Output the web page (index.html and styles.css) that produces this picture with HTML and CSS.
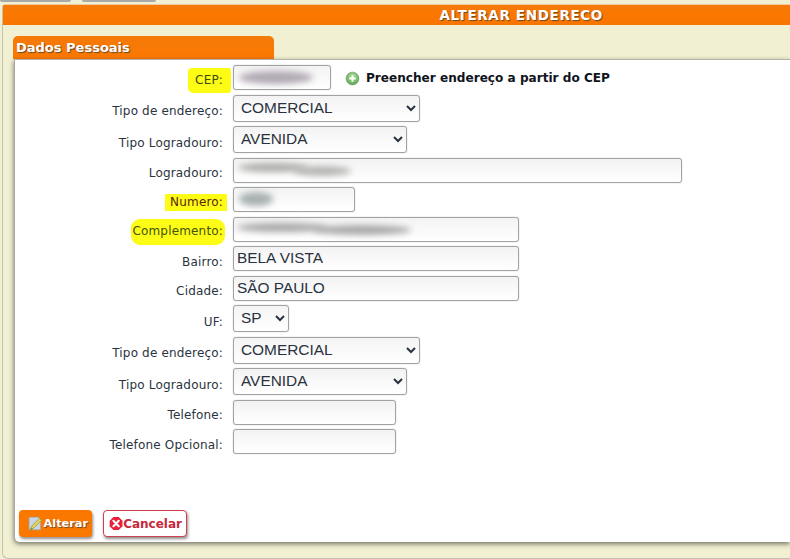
FILE: index.html
```html
<!DOCTYPE html>
<html lang="pt-BR">
<head>
<meta charset="utf-8">
<title>Alterar Endereco</title>
<link rel="stylesheet" href="styles.css">
</head>
<body>
<div class="top-tabs"><span class="top-tab first"></span><span class="top-tab second"></span></div>
<main class="outer">
  <header class="title-bar"><h1>ALTERAR ENDERECO</h1></header>
  <section class="content">
    <h2 class="section-tab">Dados Pessoais</h2>
    <div class="panel">
      <form class="form">
        <label class="lbl"><span class="mark mark-cep">CEP:</span></label>
        <div class="field cep-row">
          <span class="wrap"><input class="inp w-cep" type="text"><i class="smudge s-cep"></i></span>
          <a class="cep-link"><svg class="plus" viewBox="0 0 16 16" width="15" height="15"><defs><radialGradient id="g" cx="50%" cy="35%" r="65%"><stop offset="0" stop-color="#b5dfa5"/><stop offset="1" stop-color="#58a84f"/></radialGradient></defs><circle cx="8" cy="8" r="6.8" fill="url(#g)" stroke="#6f9f6a" stroke-width=".8"/><path d="M8 4.5v7M4.5 8h7" stroke="#fff" stroke-width="2"/></svg>Preencher endereço a partir do CEP</a>
        </div>
        <label class="lbl">Tipo de endereço:</label>
        <div class="field"><select class="sel w-tipo"><option>COMERCIAL</option></select></div>
        <label class="lbl">Tipo Logradouro:</label>
        <div class="field"><select class="sel w-log"><option>AVENIDA</option></select></div>
        <label class="lbl">Logradouro:</label>
        <div class="field"><span class="wrap"><input class="inp w-long" type="text"><i class="smudge s-log"></i><i class="smudge s-log2"></i></span></div>
        <label class="lbl"><span class="mark mark-num">Numero:</span></label>
        <div class="field"><span class="wrap"><input class="inp w-num" type="text"><i class="smudge s-num"></i></span></div>
        <label class="lbl"><span class="mark mark-comp">Complemento:</span></label>
        <div class="field"><span class="wrap"><input class="inp w-mid" type="text"><i class="smudge s-comp"></i><i class="smudge s-comp2"></i></span></div>
        <label class="lbl">Bairro:</label>
        <div class="field"><input class="inp w-mid" type="text" value="BELA VISTA"></div>
        <label class="lbl">Cidade:</label>
        <div class="field"><input class="inp w-mid" type="text" value="SÃO PAULO"></div>
        <label class="lbl">UF:</label>
        <div class="field"><select class="sel w-uf"><option>SP</option></select></div>
        <label class="lbl">Tipo de endereço:</label>
        <div class="field"><select class="sel w-tipo"><option>COMERCIAL</option></select></div>
        <label class="lbl">Tipo Logradouro:</label>
        <div class="field"><select class="sel w-log"><option>AVENIDA</option></select></div>
        <label class="lbl">Telefone:</label>
        <div class="field"><input class="inp w-tel" type="text"></div>
        <label class="lbl">Telefone Opcional:</label>
        <div class="field"><input class="inp w-tel" type="text"></div>
      </form>
      <div class="actions">
        <button class="btn btn-save" type="button"><svg viewBox="0 0 16 16" width="17" height="17"><path d="M2 2h9l2 2v10H2z" fill="#c9d6e6" stroke="#9aa9b8" stroke-width=".7"/><path d="M3 14 L5 10 L12 3 L14 5 L7 12 Z" fill="#e8d060" stroke="#8f9b3a" stroke-width=".7"/><path d="M3 15l1-3 2 1z" fill="#7d9a3a"/></svg>Alterar</button>
        <button class="btn btn-cancel" type="button"><svg viewBox="0 0 16 16" width="15" height="15"><path d="M5 .8h6L15.2 5v6L11 15.2H5L.8 11V5z" fill="#e8203a"/><path d="M5 5l6 6M11 5l-6 6" stroke="#fff" stroke-width="2.4" stroke-linecap="round"/></svg>Cancelar</button>
      </div>
    </div>
  </section>
</main>
</body>
</html>
```
FILE: styles.css
```css
* { box-sizing: border-box; }
html, body { margin: 0; padding: 0; height: 559px; overflow: hidden; background: #f2f0d2; }
body { font-family: "DejaVu Sans", Verdana, sans-serif; font-size: 12px; color: #2b3340; }

.top-tabs { display: flex; gap: 11px; height: 4px; align-items: flex-start; }
.top-tab { display: block; height: 2px; background: #a9a9a5; border-radius: 0 0 3px 3px; }
.top-tab.first { width: 71px; }
.top-tab.second { width: 74px; }

.outer { margin-left: 2px; height: 555px; border-left: 1px solid #c4c2aa; border-top: 1px solid #f0c9a0; border-radius: 4px 0 0 6px; border-bottom: 1px solid #c4c2aa; background: #f2f0d2; }
.title-bar { height: 20px; background: linear-gradient(#f47a0a, #fb7800 40%, #f97500); display: flex; justify-content: flex-end; padding-right: 187px; align-items: center; }
.title-bar h1 { margin: 0; color: #fff; font-size: 13.5px; font-weight: 700; line-height: 20px; letter-spacing: .65px; text-shadow: 1px 1px 1px #6b4a20; }

.content { padding: 11px 0 0 10px; }
.section-tab { margin: 0; width: 261px; height: 23px; padding-left: 3px; background: linear-gradient(#f47a0a, #fb7800); border-radius: 5px 5px 0 0; color: #fff; font-size: 13px; font-weight: 700; line-height: 23px; text-shadow: 1px 1px 1px #6b4a20; }
.panel { margin-left: 1px; height: 483px; background: #fff; border-top: 1px solid #b4b4a8; border-left: 1px solid #a8a8a0; border-radius: 0 0 0 5px; box-shadow: 0 2px 5px rgba(60, 60, 50, .7); display: flex; flex-direction: column; }

.form { display: grid; grid-template-columns: 208px 1fr; column-gap: 10px; margin-top: 5px; }
.lbl { display: flex; justify-content: flex-end; align-items: center; padding-top: 2px; white-space: nowrap; letter-spacing: .17px; }
.field { display: flex; align-items: center; margin-bottom: 4.5px; min-height: 25px; }

.mark { background: #fcfc14; }
.mark-cep { padding: 5px 8px 6px 7px; margin-right: -8px; border-radius: 4px 3px 3px 5px; color: #3e4a10; }
.mark-num { padding: 1px 4px 2px 5px; margin-right: -4px; color: #5c2410; }
.mark-comp { padding: 5px 2px 7px 1px; margin-right: -2px; border-radius: 9px; color: #46520e; }

.wrap { position: relative; display: block; }
.inp { display: block; height: 25px; padding: 0 3px 1px; border: 1px solid #a2a2a2; border-radius: 3px; background: linear-gradient(#f3f3f3, #fff); box-shadow: 0 0 1px #999; font-family: "Liberation Sans", Arial, sans-serif; font-size: 15.4px; color: #2a3240; }
.sel { display: block; height: 27px; padding: 0 3px 2px; border: 1px solid #a2a2a2; border-radius: 3px; background: linear-gradient(#f3f3f3, #fff); box-shadow: 0 0 1px #999; font-family: "Liberation Sans", Arial, sans-serif; font-size: 15.4px; color: #2a3240; }
.w-cep { width: 98px; }
.w-tipo { width: 187px; }
.w-log { width: 174px; }
.w-long { width: 449px; }
.w-num { width: 122px; }
.w-mid { width: 286px; }
.w-uf { width: 56px; }
.w-tel { width: 163px; }

.smudge { position: absolute; display: block; filter: blur(3px); border-radius: 50%; }
.s-cep { left: 6px; top: 6px; width: 74px; height: 13px; background: #b0a8b4; }
.s-log { left: 5px; top: 5px; width: 70px; height: 9px; background: #acacaa; }
.s-log2 { left: 60px; top: 8px; width: 58px; height: 10px; background: #b4b4b2; }
.s-num { left: 6px; top: 5px; width: 34px; height: 14px; background: #a8b0b0; }
.s-comp { left: 4px; top: 6px; width: 90px; height: 9px; background: #a8a8a8; }
.s-comp2 { left: 80px; top: 8px; width: 98px; height: 10px; background: #a8a8a8; }

.cep-row { gap: 14px; }
.cep-link { display: flex; align-items: center; gap: 6px; padding-top: 1px; color: #10141c; font-size: 12.1px; font-weight: 700; }

.actions { display: flex; gap: 11px; margin-top: auto; padding: 0 0 5px 4px; }
.btn { display: flex; align-items: center; height: 27px; padding: 0 4px 0 8px; border-radius: 4px; font-family: "DejaVu Sans", Verdana, sans-serif; font-size: 12px; font-weight: 700; box-shadow: 1px 2px 3px rgba(70, 70, 70, .6); cursor: pointer; white-space: nowrap; }
.btn-save { width: 73px; border: 0; background: #fb7800; color: #fff; font-size: 11.3px; text-shadow: 1px 1px 1px #6b4a20; }
.btn-cancel { width: 84px; padding-left: 5px; border: 1px solid #d0404c; background: #fff; color: #c8283a; }
```
